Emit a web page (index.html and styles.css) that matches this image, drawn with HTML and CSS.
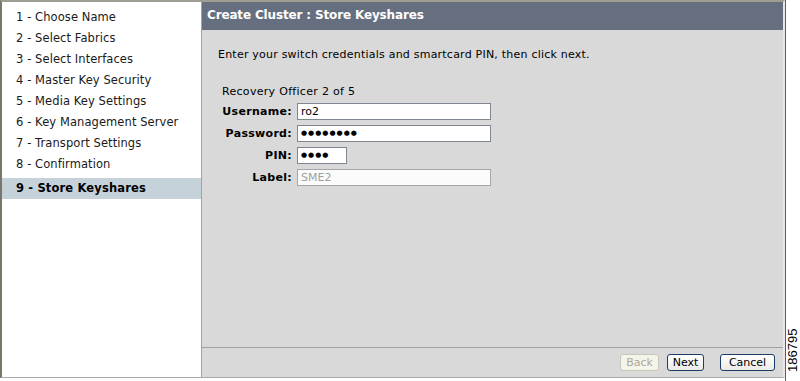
FILE: index.html
```html
<!DOCTYPE html>
<html>
<head>
<meta charset="utf-8">
<link rel="stylesheet" href="styles.css">
</head>
<body>
<div class="screen">
  <div class="app">
    <div class="main">
      <ul class="steps">
        <li>1 - Choose Name</li>
        <li>2 - Select Fabrics</li>
        <li>3 - Select Interfaces</li>
        <li>4 - Master Key Security</li>
        <li>5 - Media Key Settings</li>
        <li>6 - Key Management Server</li>
        <li>7 - Transport Settings</li>
        <li>8 - Confirmation</li>
        <li class="current">9 - Store Keyshares</li>
      </ul>
      <div class="panel">
        <div class="title">Create Cluster : Store Keyshares</div>
        <div class="body">
          <p class="intro">Enter your switch credentials and smartcard PIN, then click next.</p>
          <div class="form">
            <div class="officer">Recovery Officer 2 of 5</div>
            <label class="lbl">Username:</label>
            <div class="field wide">ro2</div>
            <label class="lbl">Password:</label>
            <div class="field wide dots">&#9679;&#9679;&#9679;&#9679;&#9679;&#9679;&#9679;&#9679;</div>
            <label class="lbl">PIN:</label>
            <div class="field short dots">&#9679;&#9679;&#9679;&#9679;</div>
            <label class="lbl">Label:</label>
            <div class="field wide disabled">SME2</div>
          </div>
        </div>
        <div class="footer">
          <button class="btn back" disabled>Back</button>
          <button class="btn next">Next</button>
          <button class="btn cancel">Cancel</button>
        </div>
      </div>
    </div>
  </div>
  <div class="edge"></div>
  <div class="figno"><span>186795</span></div>
</div>
</body>
</html>
```

FILE: styles.css
```css
html, body {
  margin: 0;
  padding: 0;
  background: #ffffff;
}
body {
  width: 800px;
  height: 381px;
  overflow: hidden;
  font-family: "DejaVu Sans", Verdana, sans-serif;
  font-size: 11px;
  color: #000;
}
.screen {
  display: flex;
  height: 381px;
}
.app {
  width: 782px;
  height: 375px;
  border-top: 2px solid #9d9d91;
  border-left: 2px solid #77776b;
  border-bottom: 1px solid #a9a9a9;
  border-right: 2px solid #ebe6e8;
  display: flex;
  flex-direction: column;
}
.main {
  flex: 1;
  display: flex;
}
.steps {
  list-style: none;
  margin: 0;
  padding: 5px 0 0 0;
  width: 199px;
  background: #fff;
}
.steps li {
  height: 21px;
  line-height: 21px;
  padding-left: 14px;
  font-size: 11.5px;
  letter-spacing: 0.08px;
  color: #1a1a1a;
  white-space: nowrap;
}
.steps li.current {
  margin-top: 3px;
  background: #c6d2da;
  font-weight: bold;
  letter-spacing: 0.15px;
  color: #000;
}
.panel {
  flex: 1;
  display: flex;
  flex-direction: column;
  background: #d9d9d9;
  border-left: 1px solid #a3a3a3;
}
.title {
  height: 28px;
  line-height: 27px;
  background: #666f80;
  color: #fff;
  font-weight: bold;
  font-size: 12px;
  letter-spacing: -0.15px;
  padding-left: 5px;
  white-space: nowrap;
}
.body {
  flex: 1;
  padding: 0 0 0 16px;
}
.intro {
  margin: 17px 0 0 0;
  line-height: 16px;
  font-size: 11px;
  letter-spacing: 0.22px;
  white-space: nowrap;
}
.form {
  margin: 22px 0 0 4px;
  display: grid;
  grid-template-columns: 70px auto;
  column-gap: 5px;
  row-gap: 5px;
  align-items: center;
  justify-items: start;
}
.officer {
  grid-column: 1 / 3;
  line-height: 14px;
  margin-bottom: -1px;
  letter-spacing: 0.3px;
}
.lbl {
  justify-self: end;
  font-weight: bold;
  letter-spacing: 0.3px;
}
.field {
  box-sizing: border-box;
  height: 17px;
  line-height: 15px;
  background: #fff;
  border: 1px solid #7f8790;
  padding-left: 3px;
  font-size: 11px;
}
.field.wide { width: 194px; }
.field.short { width: 50px; }
.field.dots { font-size: 7px; letter-spacing: 1px; }
.field.disabled {
  background: #fbfbfb;
  border-color: #a6a6a6;
  color: #a0a0a0;
}
.footer {
  height: 29px;
  border-top: 1px solid #a0a0a0;
  display: flex;
  align-items: center;
  justify-content: flex-end;
  padding-right: 8px;
}
.btn {
  box-sizing: border-box;
  height: 17px;
  margin: 0;
  padding: 0 4px;
  font-family: "DejaVu Sans", Verdana, sans-serif;
  font-size: 11px;
  line-height: 15px;
  background: linear-gradient(#ffffff, #ecebe6);
  border: 1px solid #1c3c6c;
  border-radius: 3px;
  color: #000;
}
.btn.back {
  width: 39px;
  color: #aca899;
  border-color: #c9c7ba;
  background: #f5f4ea;
}
.btn.next { width: 37px; margin-left: 8px; }
.btn.cancel { width: 55px; margin-left: 16px; }
.edge {
  width: 1px;
  height: 381px;
  background: #3b5fa8;
}
.figno {
  width: 14px;
  position: relative;
}
.figno span {
  position: absolute;
  left: 1px;
  top: 372px;
  transform: rotate(-90deg);
  transform-origin: 0 0;
  font-family: "Liberation Sans", Arial, sans-serif;
  font-size: 13px;
  line-height: 12px;
  white-space: nowrap;
}
```
